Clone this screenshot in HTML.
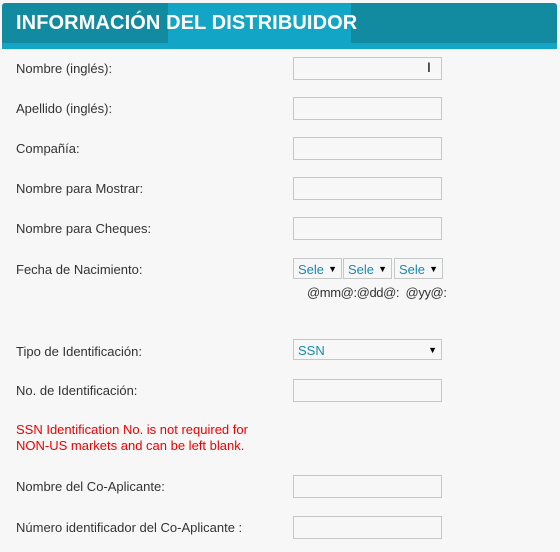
<!DOCTYPE html>
<html><head><style>
body{margin:0;width:560px;height:552px;background:#f7f7f7;font-family:"Liberation Sans",sans-serif;position:relative;overflow:hidden}
.hd{position:absolute;left:2px;top:3px;width:555px;height:46px;background:#128a9f;border-radius:3px 3px 0 0}
.hl{position:absolute;left:168px;top:3px;width:183px;height:40px;background:#13a5c6}
.hs{position:absolute;left:2px;top:43px;width:555px;height:6px;background:#13a5c6}
.ht{position:absolute;left:16px;top:12px;color:#fff;font-weight:bold;font-size:20px;letter-spacing:0.1px}
.l{position:absolute;left:16px;font-size:13px;color:#333}
.i{position:absolute;left:293px;width:147px;height:21px;border:1px solid #c4c8c8;background:#f7f7f7}
.s{position:absolute;top:258px;height:21px;border:1px solid #c4c8c8;background:#f7f7f7;font-size:13px;color:#1a87b0;line-height:21px;padding-left:4px;box-sizing:border-box;overflow:hidden}
.a{position:absolute;right:4px;top:0;color:#000;font-size:9px;background:#f7f7f7;padding-left:3px}
.r{position:absolute;left:16px;top:422px;color:#e00;font-size:13px;line-height:16px}
</style></head><body>
<div class="hd"></div><div class="hl"></div><div class="hs"></div>
<div class="ht">INFORMACIÓN DEL DISTRIBUIDOR</div>
<div class="l" style="top:61px">Nombre (inglés):</div><div class="i" style="top:57px"><span style="position:absolute;left:133px;top:1px;font-size:14px">I</span></div>
<div class="l" style="top:101px">Apellido (inglés):</div><div class="i" style="top:97px"></div>
<div class="l" style="top:141px">Compañía:</div><div class="i" style="top:137px"></div>
<div class="l" style="top:181px">Nombre para Mostrar:</div><div class="i" style="top:177px"></div>
<div class="l" style="top:221px">Nombre para Cheques:</div><div class="i" style="top:217px"></div>
<div class="l" style="top:262px">Fecha de Nacimiento:</div>
<div class="s" style="left:293px;width:49px">Sele<span class="a">▼</span></div>
<div class="s" style="left:343px;width:49px">Sele<span class="a">▼</span></div>
<div class="s" style="left:394px;width:49px">Sele<span class="a">▼</span></div>
<div class="l" style="left:307px;top:285px;letter-spacing:-0.4px">@mm@:@dd@:&nbsp; @yy@:</div>
<div class="l" style="top:344px">Tipo de Identificación:</div>
<div class="s" style="left:293px;top:339px;width:149px">SSN<span class="a">▼</span></div>
<div class="l" style="top:383px">No. de Identificación:</div><div class="i" style="top:379px"></div>
<div class="r">SSN Identification No. is not required for<br>NON-US markets and can be left blank.</div>
<div class="l" style="top:479px">Nombre del Co-Aplicante:</div><div class="i" style="top:475px"></div>
<div class="l" style="top:520px">Número identificador del Co-Aplicante :</div><div class="i" style="top:516px"></div>
</body></html>
